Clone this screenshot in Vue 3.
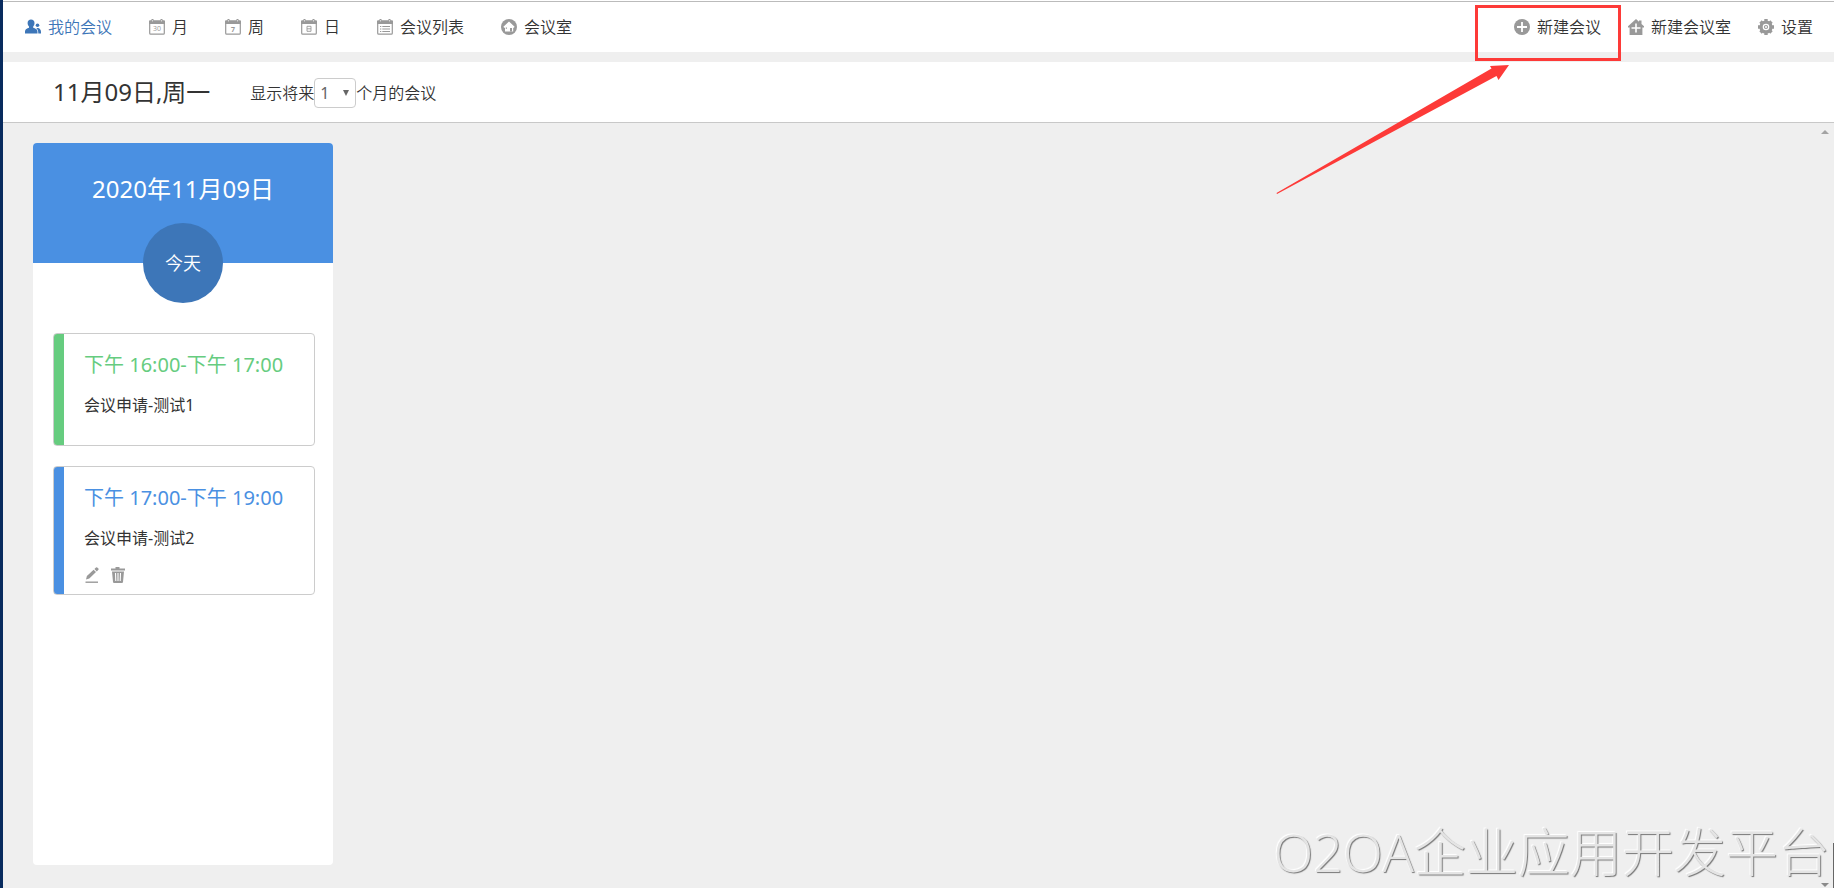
<script setup>
import { ref } from 'vue'

const active = ref('mine')
const months = ref('1')
const views = [
  { id: 'mine', label: '我的会议' },
  { id: 'month', label: '月' },
  { id: 'week', label: '周' },
  { id: 'day', label: '日' },
  { id: 'list', label: '会议列表' },
  { id: 'room', label: '会议室' }
]
const meetings = [
  { time: '下午 16:00-下午 17:00', title: '会议申请-测试1', tone: 'green', editable: false },
  { time: '下午 17:00-下午 19:00', title: '会议申请-测试2', tone: 'blue', editable: true }
]
</script>

<template>
  <div class="app">
    <header class="toolbar">
      <nav class="group views">
        <button
          v-for="v in views"
          :key="v.id"
          type="button"
          class="tool"
          :class="{ active: active === v.id }"
          @click="active = v.id"
        >
          <svg class="icon" viewBox="0 0 16 16" aria-hidden="true">
            <g v-if="v.id === 'mine'" fill="currentColor">
              <path d="M6 .6c2.200 0 3.500 1.400 3.500 3.500 0 1.500-.5 2.700-1.300 3.500v1.200c2 .8 4.300 1.400 4.300 4.200v1.500H0V13c0-2.800 2-3.400 4-4.200V7.600C3.200 6.800 2.600 5.600 2.600 4.100 2.600 2 4 .6 6 .6z" />
              <circle cx="12.500" cy="6.300" r="1.800" />
              <path d="M11.300 9h1.900c1.800.6 2.800 1.800 2.800 3.900v1.600h-2.700c0-2.300-.3-4.100-2-5.500z" />
            </g>
            <g v-else-if="v.id === 'room'">
              <circle cx="8" cy="8" r="8" fill="currentColor" />
              <path d="M8 2.600l5.600 5.200-.7.900h-.7v3.800H4V8.700h-.9l-.7-.9z" fill="#fff" />
              <path d="M9 9h2v3.500H9zM4.800 8.500h1.200v1.200H4.800z" fill="currentColor" />
            </g>
            <g v-else>
              <path d="M.7 3v11.200q0 1 1 1h12.600q1 0 1-1V3" fill="none" stroke="currentColor" stroke-width="1.200" />
              <path d="M0 5V2.300q0-1 1-1h1.500V0h2v1.300h7V0h2v1.300H15q1 0 1 1V5z" fill="currentColor" />
              <path d="M3.500 1v1.500M12.500 1v1.500" stroke="#fff" stroke-width=".6" />
              <text v-if="v.id === 'month'" x="8" y="12.400" class="glyph">30</text>
              <text v-if="v.id === 'week'" x="8" y="12.600" class="glyph bold">7</text>
              <path v-if="v.id === 'day'" d="M6 7.300h4v5H6zM6 9.800h4" fill="none" stroke="currentColor" stroke-width=".9" />
              <path v-if="v.id === 'list'" d="M3 7.500h1.300M5.300 7.500H13M3 10h1.300M5.300 10H13M3 12.500h1.300M5.300 12.500H13" stroke="currentColor" stroke-width="1" />
            </g>
          </svg>
          <span>{{ v.label }}</span>
        </button>
      </nav>
      <div class="group actions">
        <button type="button" class="tool">
          <svg class="icon" viewBox="0 0 16 16" aria-hidden="true">
            <circle cx="8" cy="8" r="8" fill="currentColor" />
            <path d="M8 3v10M3 8h10" stroke="#fff" stroke-width="1.800" />
          </svg>
          <span>新建会议</span>
        </button>
        <button type="button" class="tool">
          <svg class="icon" viewBox="0 0 16 16" aria-hidden="true">
            <path d="M8 0l3 2.700V1.500h2.500V5L16 7.300V8.500h-1.600V16H1.600V8.500H0V7.300z" fill="currentColor" />
            <path d="M8 4.500v9M3.500 9h9" stroke="#fff" stroke-width="1.600" />
          </svg>
          <span>新建会议室</span>
        </button>
        <button type="button" class="tool">
          <svg class="icon" viewBox="0 0 16 16" aria-hidden="true">
            <circle cx="8" cy="8" r="6.600" fill="currentColor" />
            <path d="M8 0v16M0 8h16M2.500 2.500l11 11M13.500 2.500l-11 11" stroke="currentColor" stroke-width="3.400" />
            <circle cx="8" cy="8" r="2.700" fill="none" stroke="#fff" stroke-width="1.200" />
            <circle cx="8" cy="8" r="1" fill="#fff" />
          </svg>
          <span>设置</span>
        </button>
      </div>
    </header>

    <section class="datebar">
      <h1>11月09日,周一</h1>
      <div class="range">
        <label for="months">显示将来</label>
        <span class="picker">
          <select id="months" v-model="months">
            <option v-for="n in 12" :key="n" :value="String(n)">{{ n }}</option>
          </select>
          <svg class="caret" viewBox="0 0 6 6" aria-hidden="true"><path d="M0 0h6L3 6z" fill="#666" /></svg>
        </span>
        <span>个月的会议</span>
      </div>
    </section>

    <main class="board">
      <section class="day">
        <header class="day-head">
          <h2>2020年11月09日</h2>
          <div class="today">今天</div>
        </header>
        <article v-for="m in meetings" :key="m.title" class="meeting" :class="m.tone">
          <h3>{{ m.time }}</h3>
          <p>{{ m.title }}</p>
          <div class="ops">
            <template v-if="m.editable">
              <button type="button" aria-label="编辑">
                <svg class="icon" viewBox="0 0 16 16" aria-hidden="true">
                  <path d="M2 12.500l.9-3.400L9.600 2.700l2.400 2.400-6.700 6.500zM10.400 2L12 .4q.6-.5 1.200 0l1.200 1.200q.5.600 0 1.200l-1.600 1.600z" fill="currentColor" />
                  <path d="M1.500 15.200h12.500" stroke="currentColor" stroke-width="1.400" />
                </svg>
              </button>
              <button type="button" aria-label="删除">
                <svg class="icon" viewBox="0 0 16 16" aria-hidden="true">
                  <path d="M1 1.500h4.500V0h4v1.500H15V3.500H1zM2 4.500h12L13 15q-.1 1-1 1H4q-.9 0-1-1z" fill="currentColor" />
                  <path d="M5.500 6l.3 8M8 6v8M10.500 6l-.3 8" stroke="#fff" stroke-width="1.100" />
                </svg>
              </button>
            </template>
          </div>
        </article>
      </section>
      <svg class="scroll up" viewBox="0 0 8 4" aria-hidden="true"><path d="M0 4h8L4 0z" fill="#a3a3a3" /></svg>
      <svg class="scroll down" viewBox="0 0 8 4" aria-hidden="true"><path d="M0 0h8L4 4z" fill="#8a8a8a" /></svg>
    </main>

    <div class="watermark">O2OA企业应用开发平台</div>
    <div class="edge"></div>
    <svg class="callout" viewBox="0 0 564 200" aria-hidden="true">
      <rect x="206.500" y="6.500" width="143" height="53" fill="none" stroke="#fd3a38" stroke-width="3" />
      <path d="M6.500 193l215-124.500-1.500-2.500 19-1-10.500 15-2-4L7 194z" fill="#fd3a38" />
    </svg>
  </div>
</template>

<style>
body {
  margin: 0;
}
</style>

<style scoped>
.app {
  position: relative;
  display: flex;
  flex-direction: column;
  box-sizing: border-box;
  min-height: 100vh;
  border-left: 3px solid #082b5e;
  background: #efefef;
  color: #333;
  font: 350 16px/24px "Noto Sans", "Noto Sans CJK SC", sans-serif;
}
h1, h2, h3, p {
  margin: 0;
  font-weight: 400;
}
button {
  padding: 0;
  border: 0;
  background: none;
  color: inherit;
  font: inherit;
  cursor: pointer;
}
.icon {
  display: block;
  width: 16px;
  height: 16px;
  flex: none;
  color: #999;
}
.glyph {
  fill: currentColor;
  font: 400 7px "Open Sans", sans-serif;
  text-anchor: middle;
}
.glyph.bold {
  font-weight: 700;
}
.toolbar {
  display: flex;
  justify-content: space-between;
  align-items: center;
  box-sizing: border-box;
  height: 52px;
  padding: 2px 21px 0 22px;
  background: linear-gradient(#fff 1px, #bbb 1px, #bbb 2px, #fff 2px);
}
.group {
  display: flex;
}
.views {
  gap: 37px;
}
.actions {
  gap: 27px;
}
.tool {
  display: flex;
  align-items: center;
  gap: 7px;
  white-space: nowrap;
}
.tool.active,
.tool.active .icon {
  color: #3d76b8;
}
.datebar {
  display: flex;
  align-items: center;
  gap: 40px;
  box-sizing: border-box;
  height: 61px;
  margin-top: 10px;
  padding-left: 50px;
  border-bottom: 1px solid #c8c8c8;
  background: #fff;
}
h1 {
  font-size: 24px;
  line-height: 36px;
}
.range {
  display: flex;
  align-items: center;
  padding-top: 2px;
}
.picker {
  position: relative;
  display: flex;
}
select {
  width: 42px;
  height: 30px;
  padding: 0 5px;
  border: 1px solid #ccc;
  border-radius: 4px;
  appearance: none;
  background: #fff;
  color: #666;
  font: inherit;
  font-weight: 400;
}
.caret {
  position: absolute;
  right: 7px;
  top: 12px;
  width: 6px;
  height: 6px;
  pointer-events: none;
}
.board {
  position: relative;
  display: flex;
  flex: 1;
  padding: 20px 30px 23px;
}
.day {
  width: 300px;
  border-radius: 4px;
  background: #fff;
}
.day-head {
  display: flex;
  flex-direction: column;
  align-items: center;
  gap: 16px;
  height: 120px;
  box-sizing: border-box;
  margin-bottom: 70px;
  padding-top: 28px;
  border-radius: 4px 4px 0 0;
  background: #4a90e2;
  color: #fff;
}
h2 {
  font-size: 24px;
  line-height: 36px;
}
.today {
  flex: none;
  width: 80px;
  border-radius: 50%;
  background: #3d76b8;
  font-size: 18px;
  line-height: 80px;
  text-align: center;
}
.meeting {
  margin: 0 18px 20px 20px;
  padding: 16px 0 11px 30px;
  border: 1px solid #ccc;
  border-radius: 4px;
  background: linear-gradient(to right, var(--tone) 10px, #fff 10px);
}
.meeting.green {
  --tone: #66cc7f;
}
.meeting.blue {
  --tone: #4a90e2;
}
h3 {
  color: var(--tone);
  font-size: 20px;
  line-height: 30px;
}
.meeting p {
  margin-top: 13px;
}
.ops {
  display: flex;
  gap: 10px;
  padding-top: 17px;
}
.scroll {
  position: absolute;
  right: 5px;
  width: 8px;
  height: 4px;
}
.up {
  top: 7px;
}
.down {
  bottom: 1px;
}
.watermark {
  position: absolute;
  right: 4px;
  bottom: 0;
  color: #e4e4e4;
  font-family: "Open Sans", "Noto Sans CJK SC", sans-serif;
  font-size: 52px;
  font-weight: 300;
  line-height: 72px;
  white-space: nowrap;
  text-shadow: 1px 1px 1px #777, -1px -1px 1px #fff;
  pointer-events: none;
}
.edge {
  position: absolute;
  right: 0;
  bottom: 0;
  width: 1px;
  height: 45px;
  background: #666;
}
.callout {
  position: absolute;
  top: 0;
  right: 0;
  width: 564px;
  height: 200px;
  pointer-events: none;
}
</style>
